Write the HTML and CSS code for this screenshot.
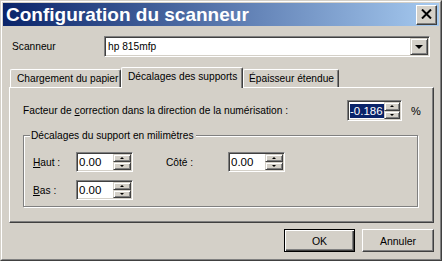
FILE: index.html
```html
<!DOCTYPE html>
<html lang="fr">
<head>
<meta charset="utf-8">
<title>Configuration du scanneur</title>
<link rel="stylesheet" href="styles.css">
</head>
<body>
<div class="window">
  <div class="frame">
    <div class="titlebar">
      <span class="title">Configuration du scanneur</span>
      <div class="close">
        <svg width="11" height="10" viewBox="0 0 11 10"><path d="M1 0.5 L10 9.5 M10 0.5 L1 9.5" stroke="#000" stroke-width="2" fill="none"/></svg>
      </div>
    </div>
    <div class="content">
      <div class="scanner-row">
        <span class="scanner-label">Scanneur</span>
        <div class="combo">
          <span class="combo-text">hp 815mfp</span>
          <span class="combo-btn"><span class="arrow-down-big"></span></span>
        </div>
      </div>
      <div class="tabs">
        <div class="tab tab-first">Chargement du papier</div>
        <div class="tab tab-selected">Décalages des supports</div>
        <div class="tab tab-last">Épaisseur étendue</div>
      </div>
      <div class="panel">
        <div class="factor-row">
          <span class="factor-label">Facteur de <u>c</u>orrection dans la direction de la numérisation :</span>
          <div class="spin spin-factor">
            <span class="spin-value"><span class="selected-text">-0.186</span></span>
            <span class="spin-btns"><span class="spin-btn"><span class="tri-up"></span></span><span class="spin-btn"><span class="tri-down"></span></span></span>
          </div>
          <span class="percent">%</span>
        </div>
        <fieldset class="group">
          <legend class="group-title">Décalages du support en milimètres</legend>
          <div class="group-row">
            <span class="field-label"><u>H</u>aut :</span>
            <div class="spin spin-small">
              <span class="spin-value">0.00</span>
              <span class="spin-btns"><span class="spin-btn"><span class="tri-up"></span></span><span class="spin-btn"><span class="tri-down"></span></span></span>
            </div>
            <span class="field-label side-label">Côté :</span>
            <div class="spin spin-small">
              <span class="spin-value">0.00</span>
              <span class="spin-btns"><span class="spin-btn"><span class="tri-up"></span></span><span class="spin-btn"><span class="tri-down"></span></span></span>
            </div>
          </div>
          <div class="group-row row-second">
            <span class="field-label"><u>B</u>as :</span>
            <div class="spin spin-small">
              <span class="spin-value">0.00</span>
              <span class="spin-btns"><span class="spin-btn"><span class="tri-up"></span></span><span class="spin-btn"><span class="tri-down"></span></span></span>
            </div>
          </div>
        </fieldset>
      </div>
      <div class="buttons">
        <div class="btn btn-default">OK</div>
        <div class="btn btn-cancel">Annuler</div>
      </div>
    </div>
  </div>
</div>
</body>
</html>
```
FILE: styles.css
```css
* { box-sizing: border-box; }
html, body { margin: 0; padding: 0; }
body {
  width: 442px;
  height: 261px;
  overflow: hidden;
  background: #d4d0c8;
  font-family: "Liberation Sans", Arial, sans-serif;
  font-size: 10.2px;
  color: #000;
}
.window {
  width: 442px;
  height: 261px;
  border: 1px solid;
  border-color: #d4d0c8 #404040 #404040 #d4d0c8;
  background: #d4d0c8;
}
.frame {
  height: 100%;
  border: 1px solid;
  border-color: #fff #808080 #808080 #fff;
  padding: 1px;
  display: flex;
  flex-direction: column;
}
.titlebar {
  height: 23px;
  flex: none;
  background: linear-gradient(to right, #0a246a, #a6caf0);
  display: flex;
  align-items: center;
  padding: 0 2px 0 3px;
}
.title {
  flex: 1;
  color: #fff;
  font-family: "Liberation Sans", Arial, sans-serif;
  font-weight: bold;
  font-size: 19px;
  line-height: 23px;
  white-space: nowrap;
}
.close {
  width: 21px;
  height: 20px;
  background: #d4d0c8;
  border: 1px solid;
  border-color: #fff #404040 #404040 #fff;
  box-shadow: inset -1px -1px 0 #808080;
  display: flex;
  align-items: center;
  justify-content: center;
  padding: 0 1px 1px 0;
}
.close svg { display: block; }
.content {
  flex: 1;
  padding: 10px 5px 0 6px;
  display: flex;
  flex-direction: column;
}
.scanner-row {
  display: flex;
  align-items: center;
  height: 21px;
}
.scanner-label {
  width: 95px;
  padding-left: 3px;
}
.combo {
  width: 326px;
  height: 21px;
  background: #fff;
  border: 1px solid;
  border-color: #808080 #fff #fff #808080;
  box-shadow: inset 1px 1px 0 #404040, inset -1px -1px 0 #d4d0c8;
  padding: 1px;
  display: flex;
  align-items: center;
}
.combo-text {
  flex: 1;
  padding-left: 2px;
}
.combo-btn {
  width: 18px;
  height: 17px;
  background: #d4d0c8;
  border: 1px solid;
  border-color: #d4d0c8 #404040 #404040 #d4d0c8;
  box-shadow: inset 1px 1px 0 #fff, inset -1px -1px 0 #808080;
  display: flex;
  align-items: center;
  justify-content: center;
}
.arrow-down-big {
  width: 0;
  height: 0;
  border-left: 4px solid transparent;
  border-right: 4px solid transparent;
  border-top: 4px solid #000;
  margin-top: 1px;
}
.tabs {
  margin-top: 10px;
  height: 20px;
  display: flex;
  align-items: flex-end;
  padding-left: 1px;
}
.tab {
  height: 18px;
  background: #d4d0c8;
  border-top: 1px solid #fff;
  border-left: 1px solid #fff;
  border-right: 1px solid #404040;
  box-shadow: inset -1px 0 0 #808080;
  border-radius: 2px 2px 0 0;
  padding: 3px 0 0 6px;
  white-space: nowrap;
  line-height: 12px;
  overflow: hidden;
}
.tab-first { width: 111px; }
.tab-selected {
  width: 122px;
  height: 21px;
  margin-bottom: -1px;
  position: relative;
  z-index: 1;
  padding-top: 3px;
}
.tab-last { width: 96px; padding-left: 5px; }
.panel {
  width: 425px;
  height: 136px;
  border: 1px solid;
  border-color: #fff #404040 #404040 #fff;
  box-shadow: inset -1px -1px 0 #808080;
  padding: 12px 0 0 13px;
}
.factor-row {
  display: flex;
  align-items: center;
  height: 21px;
}
.factor-label { width: 324px; }
.spin {
  height: 21px;
  background: #fff;
  border: 1px solid;
  border-color: #808080 #fff #fff #808080;
  box-shadow: inset 1px 1px 0 #404040, inset -1px -1px 0 #d4d0c8;
  padding: 1px;
  display: flex;
  align-items: center;
}
.spin-factor { width: 55px; }
.spin-small { width: 57px; }
.spin-value {
  flex: 1;
  padding-left: 1px;
  font-size: 11.5px;
  line-height: 14px;
  white-space: nowrap;
}
.selected-text {
  background: #0a246a;
  color: #fff;
  padding: 0 1px 0 0;
  display: inline-block;
}
.spin-btns {
  width: 18px;
  height: 17px;
  display: flex;
  flex-direction: column;
}
.group-row .spin-btns { height: 16px; }
.spin-btn {
  flex: 1;
  background: #d4d0c8;
  border: 1px solid;
  border-color: #d4d0c8 #404040 #404040 #d4d0c8;
  box-shadow: inset 1px 1px 0 #fff, inset -1px -1px 0 #808080;
  display: flex;
  align-items: center;
  justify-content: center;
}
.tri-up {
  width: 0;
  height: 0;
  border-left: 2px solid transparent;
  border-right: 2px solid transparent;
  border-bottom: 2px solid #000;
}
.tri-down {
  width: 0;
  height: 0;
  border-left: 2px solid transparent;
  border-right: 2px solid transparent;
  border-top: 2px solid #000;
}
.percent {
  margin-left: 9px;
  font-size: 11px;
}
.group {
  margin: 8px 0 0 0;
  width: 395px;
  border: 1px solid #808080;
  box-shadow: inset 1px 1px 0 #fff, 1px 1px 0 #fff;
  padding: 10px 0 6px 9px;
  min-width: 0;
}
.group-title {
  padding: 0 2px 0 1px;
  margin-left: -3px;
  line-height: 13px;
  background: #d4d0c8;
}
.group-row {
  display: flex;
  align-items: center;
  height: 20px;
}
.group-row .spin { height: 20px; }
.row-second { margin-top: 8px; }
.field-label { width: 43px; }
.side-label { width: 62px; margin-left: 33px; }
.buttons {
  margin-top: 6px;
  display: flex;
  justify-content: flex-end;
  gap: 7px;
}
.btn {
  height: 23px;
  display: flex;
  align-items: center;
  justify-content: center;
  font-size: 10.5px;
  background: #d4d0c8;
}
.btn-default {
  width: 71px;
  border: 1px solid #000;
  box-shadow: inset 1px 1px 0 #fff, inset -1px -1px 0 #404040, inset -2px -2px 0 #808080;
}
.btn-cancel {
  width: 72px;
  border: 1px solid;
  border-color: #fff #404040 #404040 #fff;
  box-shadow: inset -1px -1px 0 #808080;
}
```
